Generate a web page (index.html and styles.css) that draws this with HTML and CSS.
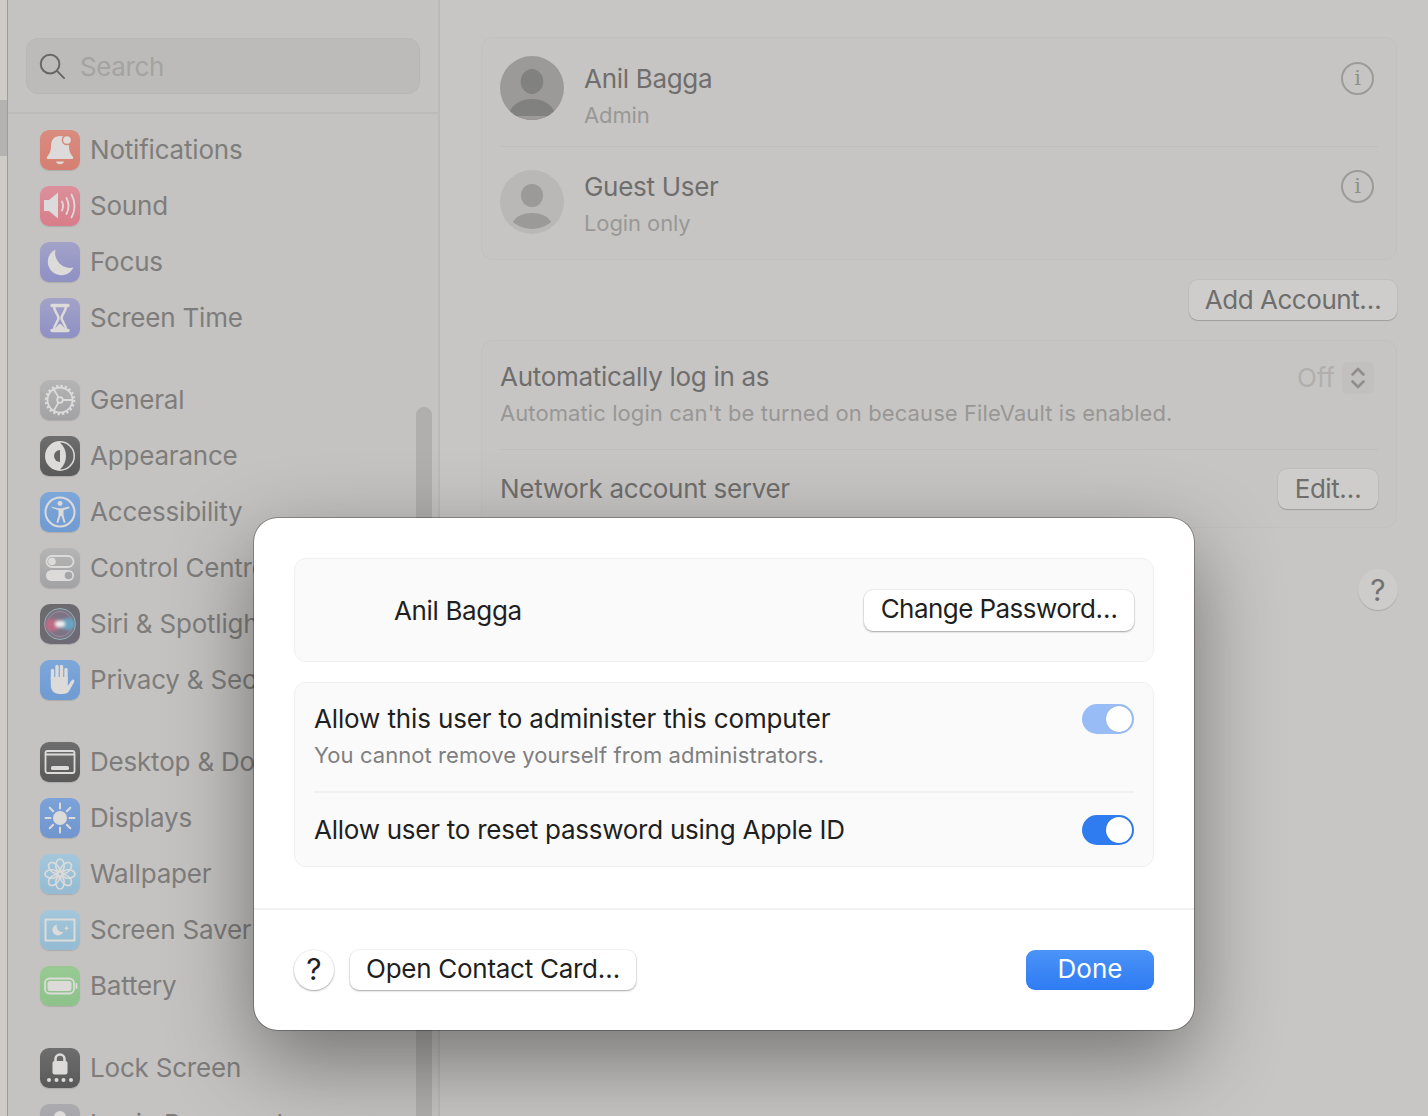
FILE: index.html
```html
<!DOCTYPE html>
<html lang="en">
<head>
<meta charset="utf-8">
<title>Users &amp; Groups</title>
<link rel="stylesheet" href="styles.css">
</head>
<body>
<div class="app">
  <div class="edge"><div class="edge-thumb"></div></div>
  <aside class="sidebar">
    <div class="search-wrap">
      <div class="search">
        <svg class="search-icon" viewBox="0 0 28 28"><circle cx="11.5" cy="11.5" r="9.7"/><path d="M18.6 18.6 26 26"/></svg>
        <span class="search-text">Search</span>
      </div>
    </div>
    <nav class="nav">
      <ul class="group">
        <li class="item"><span class="ico i-notif"><svg viewBox="0 0 40 40"><path class="w" d="M20 6c-6 0-9 4-9 10 0 5-1 7-4 11-.6 1 0 2 1 2h24c1 0 1.600-1 1-2-3-4-4-6-4-11 0-6-3-10-9-10z"/><path class="w" d="M16 31.500h8c-.5 1.800-2 2.800-4 2.800s-3.500-1-4-2.800z"/><circle class="w" cx="27" cy="10" r="4.600" stroke="#d98678" stroke-width="1.500"/></svg></span><span class="label">Notifications</span></li>
        <li class="item"><span class="ico i-sound"><svg viewBox="0 0 40 40"><path class="w" d="M4 14h5l9-7.500v26L9 25H4z"/><path class="l" d="M22 15.500c1.500 3 1.500 6 0 9M26.500 12c2.500 5 2.500 11 0 16M31.500 8.500c4 7 4 16 0 23"/></svg></span><span class="label">Sound</span></li>
        <li class="item"><span class="ico i-purple"><svg viewBox="0 0 40 40"><path class="w" d="M15.500 7.500a13.500 13.500 0 1 0 18 18A15 15 0 0 1 15.500 7.500z"/></svg></span><span class="label">Focus</span></li>
        <li class="item"><span class="ico i-purple"><svg viewBox="0 0 40 40"><path class="l l35" d="M12 7.500h16M12 32.500h16"/><path class="l l25" d="M14 8c0 6 4.500 8.500 4.500 12S14 26 14 32M26 8c0 6-4.500 8.500-4.500 12S26 26 26 32"/><path class="w" d="M14.500 32c.5-2.500 3.500-5 5.500-6.500 2 1.500 5 4 5.500 6.500z"/></svg></span><span class="label">Screen Time</span></li>
      </ul>
      <ul class="group">
        <li class="item"><span class="ico i-grey"><svg viewBox="0 0 40 40"><circle class="l" cx="20" cy="20" r="12.500"/><circle class="l l3 dash" cx="20" cy="20" r="14"/><circle class="l" cx="20" cy="20" r="2.800"/><path class="l" d="M22.800 20H32.500M18.600 17.600 13.800 9.300M18.600 22.400 13.800 30.700"/></svg></span><span class="label">General</span></li>
        <li class="item"><span class="ico i-dark"><svg viewBox="0 0 40 40"><circle class="w" cx="20" cy="20" r="15"/><path d="M20 6.500a13.500 13.500 0 0 1 0 27c4-4 6-8 6-13.500S24 10.500 20 6.500z" fill="#666"/><path d="M20 14a6 6 0 0 0 0 12z" fill="#666"/></svg></span><span class="label">Appearance</span></li>
        <li class="item"><span class="ico i-blue"><svg viewBox="0 0 40 40"><circle class="l l2" cx="20" cy="20" r="14.500"/><circle class="w" cx="20" cy="11.500" r="2.400"/><path class="w" d="M11 14.500l7 1.800h4l7-1.800.5 1.500-6 2.200v4.800l2 7.500-1.700.5-2.300-7h-1l-2.300 7-1.700-.5 2-7.500v-4.800l-6-2.200z"/></svg></span><span class="label">Accessibility</span></li>
        <li class="item"><span class="ico i-grey"><svg viewBox="0 0 40 40"><rect class="l" x="6.500" y="8" width="27" height="11" rx="5.500"/><circle class="w" cx="12" cy="13.500" r="3.800"/><rect class="w" x="6" y="22" width="28" height="11" rx="5.500"/><circle cx="28.500" cy="27.500" r="3.800" fill="#a5a5a7"/></svg></span><span class="label">Control Centre</span></li>
        <li class="item"><span class="ico i-siri"><svg viewBox="0 0 40 40"><defs><filter id="sb"><feGaussianBlur stdDeviation="1.600"/></filter></defs><circle cx="20" cy="20" r="15.500" fill="#7c7484" stroke="#8fb3b5" stroke-width="1"/><circle cx="20" cy="20" r="12.500" fill="none" stroke="#9a8c9c" stroke-width="1"/><g filter="url(#sb)"><ellipse cx="12" cy="21" rx="7" ry="6.500" fill="#bd6a85"/><ellipse cx="28" cy="20" rx="7" ry="6" fill="#68a5c2"/><ellipse cx="20" cy="20" rx="5" ry="3.500" fill="#f0eef0"/></g></svg></span><span class="label">Siri &amp; Spotlight</span></li>
        <li class="item"><span class="ico i-blue"><svg viewBox="0 0 40 40"><path class="l l35" d="M12.500 20V10.500M17 18V6.500M21.500 18V6.500M26 20V9.500"/><path class="w" d="M10.800 17h17v9l4-6c1.300-1.300 3.200 0 2.500 1.800l-4.300 7.700c-1.500 3-3.500 4.500-7.500 4.500h-3c-5.500 0-8.700-3.500-8.700-9z"/></svg></span><span class="label">Privacy &amp; Security</span></li>
      </ul>
      <ul class="group">
        <li class="item"><span class="ico i-dark"><svg viewBox="0 0 40 40"><rect class="l" x="5.500" y="9" width="29" height="22" rx="2"/><path class="l" d="M6 12.500h28"/><rect class="w" x="11" y="24" width="18" height="4" rx="1.500"/></svg></span><span class="label">Desktop &amp; Dock</span></li>
        <li class="item"><span class="ico i-blue2"><svg viewBox="0 0 40 40"><circle class="w" cx="20" cy="20" r="7"/><path class="l l2" d="M20 5.500v5M20 29.500v5M5.500 20h5M29.500 20h5M9.700 9.700l3.500 3.500M26.800 26.800l3.500 3.500M9.700 30.300l3.500-3.500M26.800 13.200l3.500-3.500"/></svg></span><span class="label">Displays</span></li>
        <li class="item"><span class="ico i-sky"><svg viewBox="0 0 40 40"><g class="petals"><ellipse cx="20" cy="11.500" rx="4.200" ry="6.500"/><ellipse cx="20" cy="11.500" rx="4.200" ry="6.500" transform="rotate(45 20 20)"/><ellipse cx="20" cy="11.500" rx="4.200" ry="6.500" transform="rotate(90 20 20)"/><ellipse cx="20" cy="11.500" rx="4.200" ry="6.500" transform="rotate(135 20 20)"/><ellipse cx="20" cy="11.500" rx="4.200" ry="6.500" transform="rotate(180 20 20)"/><ellipse cx="20" cy="11.500" rx="4.200" ry="6.500" transform="rotate(225 20 20)"/><ellipse cx="20" cy="11.500" rx="4.200" ry="6.500" transform="rotate(270 20 20)"/><ellipse cx="20" cy="11.500" rx="4.200" ry="6.500" transform="rotate(315 20 20)"/></g></svg></span><span class="label">Wallpaper</span></li>
        <li class="item"><span class="ico i-sky"><svg viewBox="0 0 40 40"><rect class="l l2" x="5.500" y="9.500" width="29" height="21"/><path class="w" d="M17 14.500a5.500 5.500 0 1 0 6 7.500 5.500 5.500 0 0 1-6-7.500z"/><path class="w" d="M26.500 15.500l.7 2 2 .7-2 .7-.7 2-.7-2-2-.7 2-.7z"/></svg></span><span class="label">Screen Saver</span></li>
        <li class="item"><span class="ico i-green"><svg viewBox="0 0 40 40"><rect class="l" x="5" y="12.500" width="29" height="15" rx="4.500"/><rect class="w" x="7.500" y="15" width="24" height="10" rx="2.500"/><path class="l" d="M36.500 18v4"/></svg></span><span class="label">Battery</span></li>
      </ul>
      <ul class="group">
        <li class="item"><span class="ico i-dark"><svg viewBox="0 0 40 40"><path class="l l25" d="M15.500 14v-3a4.500 4.500 0 0 1 9 0v3"/><rect class="w" x="12.500" y="13" width="15" height="13.500" rx="2"/><circle class="w" cx="9" cy="32" r="2"/><circle class="w" cx="16.500" cy="32" r="2"/><circle class="w" cx="23.500" cy="32" r="2"/><circle class="w" cx="31" cy="32" r="2"/></svg></span><span class="label">Lock Screen</span></li>
        <li class="item"><span class="ico i-steel"><svg viewBox="0 0 40 40"><circle class="w" cx="20" cy="13" r="6"/><path class="w" d="M8 33c0-7 5-11 12-11s12 4 12 11z"/></svg></span><span class="label">Login Password</span></li>
      </ul>
    </nav>
    <div class="scrollbar"></div>
  </aside>
  <main class="main">
    <section class="card">
      <div class="user-row first">
        <svg class="avatar" viewBox="0 0 64 64"><defs><clipPath id="av"><circle cx="32" cy="32" r="32"/></clipPath></defs><circle cx="32" cy="32" r="32" fill="#9b9a99"/><g clip-path="url(#av)"><ellipse cx="32" cy="25.500" rx="11.300" ry="12.500" fill="#818180"/><ellipse cx="32" cy="60" rx="23" ry="17" fill="#818180"/><path d="M0 60h64v4H0z" fill="#9b9a99"/></g></svg>
        <div class="user-text"><span class="user-name">Anil Bagga</span><span class="user-sub">Admin</span></div>
        <span class="info">i</span>
      </div>
      <div class="user-row second">
        <svg class="avatar" viewBox="0 0 64 64"><circle cx="32" cy="32" r="32" fill="#b9b8b6"/><ellipse cx="32" cy="25.500" rx="11" ry="11.500" fill="#9b9a98"/><path d="M13 52c3-6 11-9 19-9s16 3 19 9c-3 3-11 7-19 7s-16-4-19-7z" fill="#9b9a98"/></svg>
        <div class="user-text"><span class="user-name">Guest User</span><span class="user-sub">Login only</span></div>
        <span class="info">i</span>
      </div>
    </section>
    <div class="add-row"><button class="btn-bg add">Add Account…</button></div>
    <section class="card">
      <div class="login-row">
        <div class="login-text"><span class="user-name">Automatically log in as</span><span class="login-sub">Automatic login can't be turned on because FileVault is enabled.</span></div>
        <div class="off"><span class="off-text">Off</span><span class="stepper"><svg viewBox="0 0 32 32"><path d="M10.500 12.500 16 7l5.500 5.500M10.500 19.500 16 25l5.500-5.500"/></svg></span></div>
      </div>
      <div class="server-row"><span class="user-name">Network account server</span><button class="btn-bg edit">Edit…</button></div>
    </section>
    <div class="help-row"><button class="help-bg">?</button></div>
  </main>
</div>
<div class="modal" role="dialog">
  <div class="modal-body">
    <div class="m-card m-user"><span class="m-name">Anil Bagga</span><button class="m-btn change">Change Password…</button></div>
    <div class="m-card m-opts">
      <div class="opt opt-first">
        <div class="opt-text"><span class="m-title">Allow this user to administer this computer</span><span class="m-sub">You cannot remove yourself from administrators.</span></div>
        <span class="toggle toggle-dim"><span class="knob"></span></span>
      </div>
      <div class="opt opt-second"><span class="m-title">Allow user to reset password using Apple ID</span><span class="toggle"><span class="knob"></span></span></div>
    </div>
  </div>
  <div class="modal-foot">
    <button class="m-help">?</button>
    <button class="m-btn contact">Open Contact Card…</button>
    <button class="done">Done</button>
  </div>
</div>
</body>
</html>
```
FILE: styles.css
```css
* { box-sizing: border-box; }
html, body { margin: 0; padding: 0; height: 100%; overflow: hidden; }
body { font-family: Inter, "Noto Sans", sans-serif; background: #c7c6c4; }
button { font-family: inherit; padding: 0; border: 0; }
ul { list-style: none; margin: 0; padding: 0; }

.app { display: flex; height: 1116px; overflow: hidden; }

.edge { width: 8px; flex: none; background: #cfccc8; border-right: 1px solid #9d9c9a; padding-top: 100px; }
.edge-thumb { height: 56px; background: #b4b3b1; }

.sidebar { position: relative; width: 432px; flex: none; background: #c4c3c1; border-right: 2px solid #bbbab8; }
.search-wrap { height: 114px; padding: 38px 18px 0 18px; border-bottom: 2px solid #bcbbb9; }
.search { display: flex; align-items: center; height: 56px; padding-left: 12px; gap: 14px; background: #bcbbb9; border: 1px solid #b8b7b5; border-radius: 12px; }
.search-icon { width: 27px; height: 27px; fill: none; stroke: #676766; stroke-width: 2; stroke-linecap: round; flex: none; }
.search-text { font-size: 26px; color: #a4a3a1; letter-spacing: -.4px; padding-top: 1px; }

.nav { padding: 8px 0 0 32px; display: flex; flex-direction: column; gap: 26px; }
.item { display: flex; align-items: center; height: 56px; gap: 10px; }
.label { font-size: 26px; color: #7e7d7c; white-space: nowrap; letter-spacing: -.2px; padding-bottom: 1px; }
.ico { width: 40px; height: 40px; border-radius: 9px; flex: none; box-shadow: 0 1px 1px rgba(0,0,0,.12); display: block; }
.ico svg { display: block; width: 40px; height: 40px; }
.w { fill: #dcdbda; }
.l { fill: none; stroke: #dcdbda; stroke-width: 1.800; stroke-linecap: round; stroke-linejoin: round; }
.l2 { stroke-width: 2; }
.l25 { stroke-width: 2.500; }
.l3 { stroke-width: 2.600; }
.l35 { stroke-width: 3.400; }
.dash { stroke-dasharray: 2.200 2.200; stroke-linecap: butt; }
.petals ellipse { fill: none; stroke: #dcdbda; stroke-width: 1.600; }

.i-notif { background: linear-gradient(#d98c7f, #d67f72); }
.i-sound { background: linear-gradient(#dc909b, #d87d8a); }
.i-purple { background: linear-gradient(#a3a2c8, #8f90c4); }
.i-grey { background: linear-gradient(#b5b5b6, #a2a2a4); }
.i-dark { background: linear-gradient(#6e6e6e, #595959); }
.i-blue { background: linear-gradient(#7ea7d9, #6f9bd3); }
.i-blue2 { background: linear-gradient(#7ba3d8, #7195cf); }
.i-sky { background: linear-gradient(#a3c7da, #94bbd3); }
.i-green { background: linear-gradient(#98c993, #8dc28a); }
.i-steel { background: linear-gradient(#ababaf, #9d9da3); }
.i-siri { background: linear-gradient(135deg, #6b6b6b, #6f6a78); border-radius: 10px; }

.scrollbar { position: absolute; left: 408px; top: 407px; width: 16px; height: 760px; border-radius: 8px; background: #b0afad; }

.main { flex: 1; min-width: 0; padding: 37px 31px 0 41px; background: #c7c6c4; }
.card { background: #c6c5c3; border: 1px solid #c2c1bf; border-radius: 12px; padding: 0 18px; }
.user-row { display: flex; align-items: flex-start; gap: 20px; border-bottom: 1px solid #bfbebc; padding-right: 4px; }
.user-row.first { height: 109px; padding-top: 18px; --text-top: 8px; --info-top: 6px; }
.user-row.second { height: 112px; padding-top: 23px; border-bottom: 0; --text-top: 2px; --info-top: 0; }
.avatar { width: 64px; height: 64px; flex: none; }
.user-text { display: flex; flex-direction: column; gap: 7px; flex: 1; margin-top: var(--text-top); }
.user-name { font-size: 26px; line-height: 30px; color: #6f6e6d; white-space: nowrap; letter-spacing: -.3px; }
.user-sub { font-size: 22px; line-height: 29px; color: #999896; letter-spacing: -.1px; }
.info { width: 33px; height: 33px; flex: none; margin-top: var(--info-top); border: 2px solid #9c9b99; border-radius: 50%; display: flex; align-items: center; justify-content: center; font: 21px/1 "DejaVu Serif", serif; color: #8f8e8c; }

.add-row { display: flex; justify-content: flex-end; padding: 20px 0 20px; }
.btn-bg { background: #cecdcb; border-radius: 9px; box-shadow: 0 1px 1px rgba(0,0,0,.18), 0 0 0 1px rgba(0,0,0,.03); color: #6f6e6d; font-size: 26px; height: 40px; letter-spacing: -.45px; padding-bottom: 2px; }
.add { width: 208px; }
.edit { width: 100px; padding-bottom: 1px; }

.login-row { display: flex; justify-content: space-between; height: 109px; padding: 21px 4px 0 0; border-bottom: 1px solid #bfbebc; }
.login-text { display: flex; flex-direction: column; gap: 7px; }
.login-sub { font-size: 22px; line-height: 29px; color: #989795; letter-spacing: .09px; white-space: nowrap; }
.off { display: flex; gap: 7px; align-items: flex-start; }
.off-text { font-size: 26px; line-height: 30px; color: #b0afad; padding-top: 1px; }
.stepper { display: block; width: 32px; height: 32px; border-radius: 6px; background: #c1c0be; }
.stepper svg { display: block; width: 32px; height: 32px; fill: none; stroke: #8f8e8c; stroke-width: 2.600; stroke-linecap: round; stroke-linejoin: round; }
.server-row { display: flex; justify-content: space-between; align-items: center; height: 77px; }

.help-row { display: flex; justify-content: flex-end; padding: 41px 0 0; margin-right: -1px; }
.help-bg { width: 40px; height: 41px; border-radius: 50%; background: #cdccca; color: #737271; font-size: 30px; box-shadow: 0 1px 1px rgba(0,0,0,.15); }

.modal { position: absolute; left: 254px; top: 518px; width: 940px; height: 512px; background: #fff; border-radius: 24px; box-shadow: 0 0 0 1px rgba(0,0,0,.28), 0 30px 85px rgba(0,0,0,.42); display: flex; flex-direction: column; color: #1f1f1f; }
.modal-body { padding: 40px 40px 41px; display: flex; flex-direction: column; gap: 20px; border-bottom: 2px solid #f2f2f2; }
.m-card { background: #fafafa; border: 1px solid #f0f0f0; border-radius: 12px; padding: 0 19px; }
.m-user { height: 104px; display: flex; align-items: center; justify-content: space-between; padding-left: 99px; }
.m-name { font-size: 26px; line-height: 30px; color: #1f1f1f; white-space: nowrap; letter-spacing: -.35px; padding-top: 2px; }
.m-title { font-size: 26px; line-height: 30px; color: #1f1f1f; white-space: nowrap; letter-spacing: -.14px; }
.opt-second .m-title { letter-spacing: -.25px; }
.m-btn { background: #fff; border-radius: 9px; font-size: 26px; color: #1f1f1f; height: 41px; box-shadow: 0 1px 2px rgba(0,0,0,.32), 0 0 0 1px rgba(0,0,0,.04); padding-bottom: 4px; }
.change { width: 270px; letter-spacing: -.55px; }
.m-opts { height: 185px; display: flex; flex-direction: column; }
.opt { display: flex; justify-content: space-between; align-items: flex-start; }
.opt-first { height: 110px; padding-top: 21px; border-bottom: 2px solid #f0f0f0; }
.opt-second { flex: 1; align-items: center; }
.opt-text { display: flex; flex-direction: column; gap: 7px; }
.m-sub { font-size: 22px; line-height: 29px; color: #7f7f7f; letter-spacing: .07px; white-space: nowrap; }
.toggle { width: 52px; height: 30px; border-radius: 15px; background: #2f7bf0; display: flex; justify-content: flex-end; align-items: center; padding-right: 2px; flex: none; }
.toggle-dim { background: #98bdf6; }
.knob { width: 26px; height: 26px; border-radius: 50%; background: #fff; box-shadow: 0 0 1px rgba(0,0,0,.3); }

.modal-foot { display: flex; align-items: center; padding: 40px; gap: 16px; flex: 1; }
.m-help { width: 40px; height: 40px; border-radius: 50%; background: #fff; font-size: 30px; color: #1f1f1f; padding-bottom: 2px; box-shadow: 0 1px 2px rgba(0,0,0,.32), 0 0 0 1px rgba(0,0,0,.04); }
.contact { width: 286px; height: 40px; letter-spacing: -.28px; padding-bottom: 3px; }
.done { margin-left: auto; width: 128px; height: 40px; border-radius: 9px; background: linear-gradient(#4a93f7, #2f7bf3); color: #fff; font-size: 26px; padding-bottom: 3px; }
```
